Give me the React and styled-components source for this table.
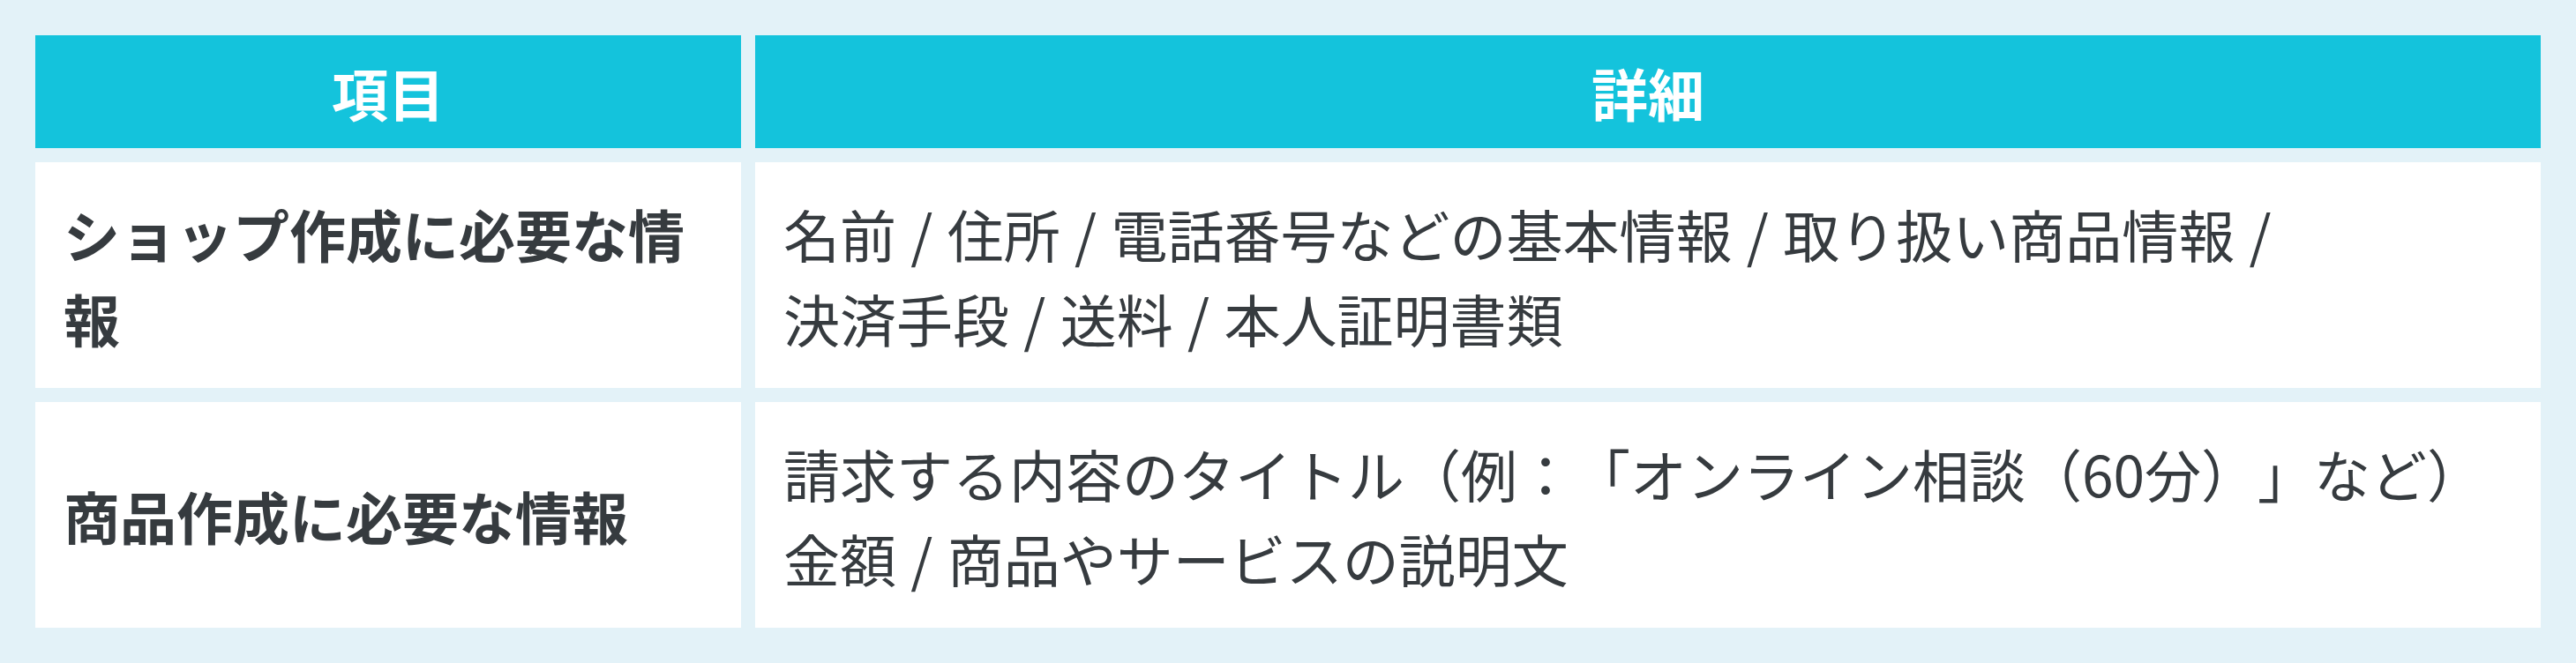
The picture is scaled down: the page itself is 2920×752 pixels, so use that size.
import React from "react";
import styled, { createGlobalStyle } from "styled-components";

const Global = createGlobalStyle`
  html, body { margin: 0; padding: 0; background: #e3f2f8; }
  body { font-family: "Noto Sans CJK JP", "Noto Sans", sans-serif; }
`;

const Page = styled.div`
  background: #e3f2f8;
  padding: 40px;
  box-sizing: border-box;
  width: 2920px;
`;

const Table = styled.div`
  display: grid;
  grid-template-columns: 800px 1fr;
  gap: 16px;
`;

const HeadCell = styled.div`
  background: #14c3dc;
  color: #ffffff;
  font-weight: 700;
  font-size: 64px;
  line-height: 96px;
  padding: 16px 32px;
  text-align: center;
`;

const LabelCell = styled.div`
  background: #ffffff;
  color: #363b3f;
  font-weight: 700;
  font-size: 64px;
  line-height: 96px;
  padding: 32px;
  display: flex;
  align-items: center;
  text-spacing-trim: space-all;
`;

const DetailCell = styled.div`
  background: #ffffff;
  color: #363b3f;
  font-weight: 400;
  font-size: 64px;
  line-height: 96px;
  padding: 32px;
  word-spacing: 2px;
  text-spacing-trim: space-all;
`;

const rows = [
  {
    label: "ショップ作成に必要な情報",
    lines: [
      "名前 / 住所 / 電話番号などの基本情報 / 取り扱い商品情報 /",
      "決済手段 / 送料 / 本人証明書類",
    ],
  },
  {
    label: "商品作成に必要な情報",
    lines: [
      "請求する内容のタイトル（例：「オンライン相談（60分）」など）",
      "金額 / 商品やサービスの説明文",
    ],
  },
];

export default function App() {
  return (
    <>
      <Global />
      <Page>
        <Table>
          <HeadCell>項目</HeadCell>
          <HeadCell>詳細</HeadCell>
          {rows.map((r) => (
            <React.Fragment key={r.label}>
              <LabelCell>{r.label}</LabelCell>
              <DetailCell>
                {r.lines.map((l, i) => (
                  <React.Fragment key={i}>
                    {l}
                    {i < r.lines.length - 1 && <br />}
                  </React.Fragment>
                ))}
              </DetailCell>
            </React.Fragment>
          ))}
        </Table>
      </Page>
    </>
  );
}
